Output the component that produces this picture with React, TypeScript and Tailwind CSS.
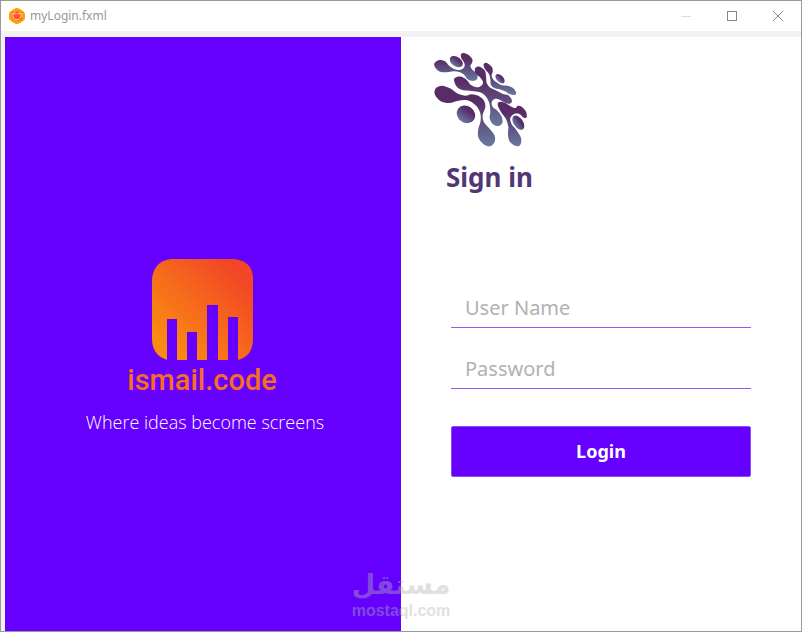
import React from "react";

type Point = [number, number];

/** Closed Catmull-Rom curve through the given points. */
function smooth(points: Point[]): string {
  const n = points.length;
  let d = `M${points[0][0]} ${points[0][1]}`;
  for (let i = 0; i < n; i++) {
    const a = points[(i + n - 1) % n];
    const b = points[i];
    const c = points[(i + 1) % n];
    const e = points[(i + 2) % n];
    d += `C${b[0] + (c[0] - a[0]) / 6} ${b[1] + (c[1] - a[1]) / 6} ${c[0] - (e[0] - b[0]) / 6} ${c[1] - (e[1] - b[1]) / 6} ${c[0]} ${c[1]}`;
  }
  return d + "Z";
}

const branches: Point[][] = [
  [[13, 40], [28, 30], [45, 34], [58, 48], [72, 57], [85, 60], [97, 57], [104, 48], [102, 37], [94, 25], [93, 13], [102, 9], [116, 15], [127, 28], [126, 39], [121, 48], [127, 59], [141, 72], [141, 88], [128, 93], [113, 88], [103, 75], [88, 66], [70, 64], [50, 67], [30, 65], [16, 53]],
  [[161, 43], [171, 39], [186, 52], [188, 65], [185, 77], [191, 90], [204, 100], [216, 106], [231, 107], [248, 113], [258, 127], [254, 135], [240, 133], [228, 125], [213, 119], [195, 115], [183, 105], [181, 88], [177, 72], [165, 57]],
  [[72, 90], [80, 81], [97, 81], [112, 92], [123, 105], [140, 112], [154, 107], [159, 96], [150, 82], [136, 69], [136, 54], [149, 50], [164, 61], [168, 78], [170, 99], [181, 113], [200, 122], [217, 131], [235, 136], [246, 152], [240, 161], [225, 158], [209, 149], [194, 147], [185, 157], [188, 171], [202, 182], [215, 200], [217, 218], [205, 228], [188, 222], [179, 205], [181, 185], [178, 160], [168, 140], [150, 127], [125, 123], [100, 121], [81, 111]],
  [[14, 132], [18, 114], [36, 107], [60, 115], [80, 129], [105, 137], [125, 133], [146, 138], [162, 152], [166, 172], [158, 195], [161, 215], [177, 234], [193, 255], [194, 275], [180, 289], [160, 282], [145, 262], [145, 237], [152, 212], [150, 187], [136, 165], [112, 151], [85, 152], [58, 159], [31, 153]],
  [[203, 165], [208, 156], [224, 158], [244, 170], [257, 174], [262, 168], [275, 170], [288, 185], [290, 202], [281, 203], [268, 192], [252, 192], [241, 204], [244, 221], [259, 240], [273, 264], [271, 284], [258, 288], [240, 276], [234, 255], [235, 230], [228, 207], [213, 186]],
];

function AppIcon() {
  return (
    <svg className="h-4 w-4" viewBox="0 0 16 16" aria-hidden="true">
      <path d="M5 1Q8 -1 11 1L14 3Q16 4 16 7V10Q16 12 14 13L11 15Q8 17 5 15L2 13Q0 12 0 10V6Q0 4 2 3Z" fill="#ff9d0a" />
      <path d="M3 4L6 5L8 3L10 5L13 4L12 7L13 11L9 13L5 12L3 9Z" fill="#f4511e" />
      <path d="M4 5Q3 11 8 12Q13 11 12 5L10 6H6Z" fill="none" stroke="#ffe5cc" strokeWidth="1" />
      <circle cx="8" cy="8" r="2" fill="#ff5722" />
    </svg>
  );
}

function TitleBar() {
  return (
    <header className="flex h-[30px] items-center bg-white pl-2">
      <AppIcon />
      <h1 className="ml-[5px] flex-1 text-xs text-[#999]">myLogin.fxml</h1>
      <button type="button" aria-label="Minimize" className="flex h-full w-[46px] items-center justify-center">
        <span className="h-px w-[10px] bg-[#ddd]" />
      </button>
      <button type="button" aria-label="Maximize" className="flex h-full w-[46px] items-center justify-center">
        <span className="h-[10px] w-[10px] border border-[#888]" />
      </button>
      <button type="button" aria-label="Close" className="flex h-full w-[46px] items-center justify-center">
        <svg className="h-[10px] w-[10px]" viewBox="0 0 10 10" stroke="#888" strokeWidth="1">
          <path d="M0 0L10 10M10 0L0 10" />
        </svg>
      </button>
    </header>
  );
}

function ChartLogo() {
  return (
    <svg className="h-[101px] w-[101px]" viewBox="0 0 101 101" aria-hidden="true">
      <defs>
        <linearGradient id="ember" x1="0" y1="1" x2="1" y2="0">
          <stop offset="0.15" stopColor="#f98a12" />
          <stop offset="0.85" stopColor="#f24726" />
        </linearGradient>
      </defs>
      <path
        d="M19 0H82Q101 2 101 20V80Q101 97 86 101V58H76V101H66V46H55V101H45V73H35V101H25V60H15V101Q0 96 0 80V20Q2 2 19 0Z"
        fill="url(#ember)"
      />
    </svg>
  );
}

function OrganicLogo() {
  return (
    <svg className="ml-8 h-24 w-[95px]" viewBox="9 6 285 288" fill="url(#dusk)" aria-hidden="true">
      <defs>
        <linearGradient id="dusk" x1="0" y1="0" x2="0" y2="1">
          <stop offset="0.25" stopColor="#592c66" />
          <stop offset="1" stopColor="#667aa0" />
        </linearGradient>
      </defs>
      {branches.map((points, i) => (
        <path key={i} d={smooth(points)} />
      ))}
      <ellipse cx="79" cy="35" rx="22" ry="14" transform="rotate(35 79 35)" />
      <ellipse cx="210" cy="86" rx="17" ry="10" transform="rotate(45 210 86)" />
      <ellipse cx="108" cy="193" rx="29" ry="25" transform="rotate(35 108 193)" />
      <ellipse cx="265" cy="218" rx="24" ry="14" transform="rotate(55 265 218)" />
    </svg>
  );
}

function Field({ label, type }: { label: string; type: string }) {
  return (
    <input
      type={type}
      aria-label={label}
      placeholder={label}
      className="block h-10 w-full border-b border-[#9659f5] bg-white px-[14px] text-xl leading-6 outline-none placeholder:text-[#b3b0b3]"
    />
  );
}

function SignInForm() {
  return (
    <form className="mt-[95px] px-[50px]" onSubmit={(e) => e.preventDefault()}>
      <div className="flex flex-col gap-[21px]">
        <Field label="User Name" type="text" />
        <Field label="Password" type="password" />
      </div>
      <button
        type="submit"
        className="mt-[37px] h-[51px] w-full rounded-[2px] border border-[#8d4ff5] bg-[#6500ff] pb-[2px] text-lg font-bold text-white"
      >
        Login
      </button>
    </form>
  );
}

function Watermark() {
  return (
    <div className="pointer-events-none absolute inset-x-0 bottom-3 flex flex-col items-center text-[#b4b4b4] opacity-40">
      <span lang="ar" dir="rtl" className="font-['DejaVu_Sans',sans-serif] text-[27px] leading-9 font-bold">مستقل</span>
      <span className="font-['Liberation_Sans',sans-serif] text-base leading-4 font-bold">mostaql.com</span>
    </div>
  );
}

export default function App() {
  return (
    <div className="relative flex min-h-screen flex-col border border-[#999] bg-[#f2f2f2] font-['Noto_Sans','Open_Sans',sans-serif]">
      <TitleBar />
      <main className="mt-[6px] grid flex-1 grid-cols-2">
        <section className="ml-1 flex flex-col items-center bg-[#6500ff] pt-[222px]">
          <div className="flex flex-col items-center pr-[2px]">
            <ChartLogo />
            <p className="font-[Roboto,sans-serif] text-[29px] leading-10 font-medium text-[#f66e1e]">ismail.code</p>
          </div>
          <p className="mt-[10px] pl-1 font-['Open_Sans',sans-serif] text-lg leading-6 font-light text-white">Where ideas become screens</p>
        </section>
        <section className="bg-white pt-[15px]">
          <OrganicLogo />
          <h2 className="mt-[13px] pl-[45px] text-[26px] leading-8 font-bold text-[#523774]">Sign in</h2>
          <SignInForm />
        </section>
      </main>
      <Watermark />
    </div>
  );
}
